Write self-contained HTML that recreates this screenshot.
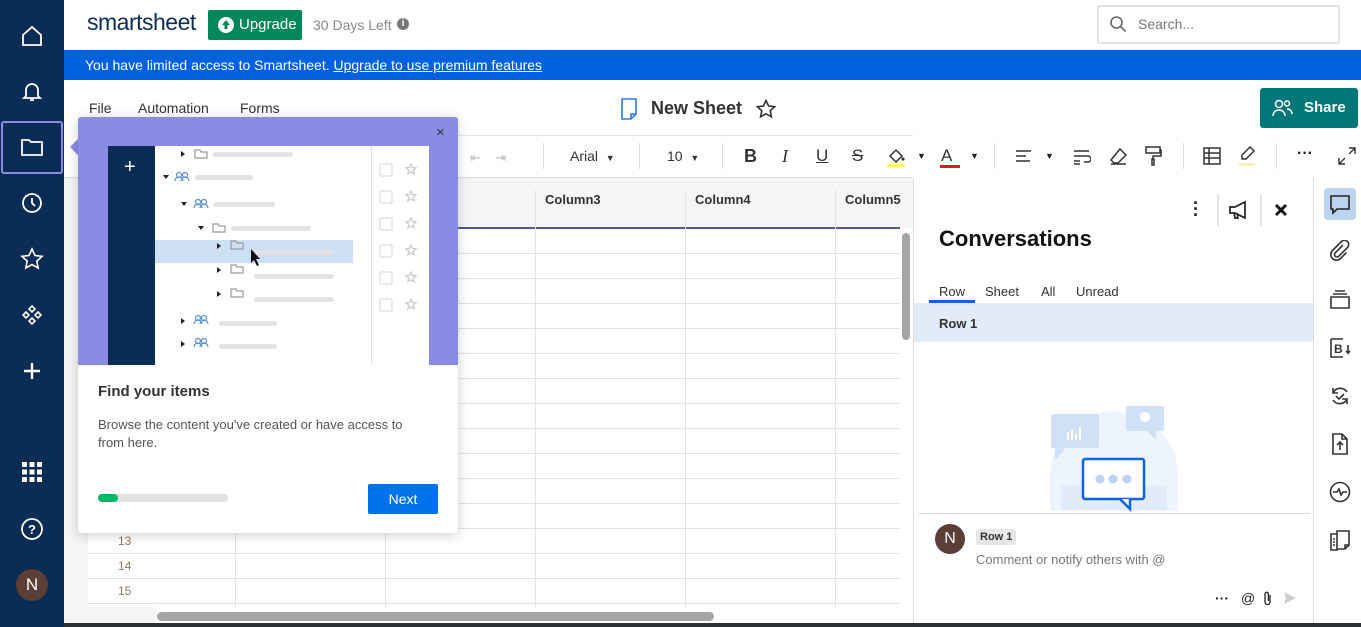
<!DOCTYPE html>
<html><head><meta charset="utf-8"><style>
*{box-sizing:border-box;margin:0;padding:0}
body{width:1361px;height:627px;overflow:hidden;position:relative;background:#fff;font-family:"Liberation Sans",sans-serif;color:#222}
.a{position:absolute}
.nav{left:0;top:0;width:64px;height:627px;background:#0b2d55}
.nav svg{position:absolute;left:20px}
.t{font-size:14px}
.tb{color:#333;font-size:14px}
.sep{width:1px;height:26px;background:#ddd;top:143px}
.rn{font-size:12px;color:#8a7a6a;left:118px}
</style></head><body>
<div class="a nav">
<svg style="top:24px" width="24" height="24" viewBox="0 0 24 24" fill="none" stroke="#fff" stroke-width="1.8"><path d="M3 11L12 3l9 8v10H3z"/></svg>
<svg style="top:79px" width="24" height="24" viewBox="0 0 24 24" fill="none" stroke="#fff" stroke-width="1.8"><path d="M6 17V11a6 6 0 0112 0v6l2 2H4zM10 21h4"/></svg>
<div class="a" style="left:1px;top:121px;width:62px;height:53px;border:2px solid #8a8be3;border-radius:3px"></div>
<svg style="top:135px" width="24" height="24" viewBox="0 0 24 24" fill="none" stroke="#fff" stroke-width="1.8"><path d="M2 5h7l2 2h11v13H2z"/></svg>
<svg style="top:191px" width="24" height="24" viewBox="0 0 24 24" fill="none" stroke="#fff" stroke-width="1.8"><circle cx="12" cy="12" r="9"/><path d="M12 7v5l3 3"/></svg>
<svg style="top:247px" width="24" height="24" viewBox="0 0 24 24" fill="none" stroke="#fff" stroke-width="1.6"><path d="M12 2l3 6.5 7 .8-5.2 4.8 1.4 7L12 17.6 5.8 21l1.4-7L2 9.3l7-.8z"/></svg>
<svg style="top:303px" width="24" height="24" viewBox="0 0 24 24" fill="none" stroke="#fff" stroke-width="1.6"><path d="M12 3l3 3-3 3-3-3zM6 9l3 3-3 3-3-3zM18 9l3 3-3 3-3-3zM12 15l3 3-3 3-3-3z"/></svg>
<svg style="top:359px" width="24" height="24" viewBox="0 0 24 24" stroke="#fff" stroke-width="2.4"><path d="M12 4v16M4 12h16"/></svg>
<svg style="top:460px" width="24" height="24" viewBox="0 0 24 24" fill="#fff"><rect x="2" y="2" width="5" height="5"/><rect x="9.5" y="2" width="5" height="5"/><rect x="17" y="2" width="5" height="5"/><rect x="2" y="9.5" width="5" height="5"/><rect x="9.5" y="9.5" width="5" height="5"/><rect x="17" y="9.5" width="5" height="5"/><rect x="2" y="17" width="5" height="5"/><rect x="9.5" y="17" width="5" height="5"/><rect x="17" y="17" width="5" height="5"/></svg>
<svg style="top:517px" width="24" height="24" viewBox="0 0 24 24" fill="none" stroke="#fff" stroke-width="1.8"><circle cx="12" cy="12" r="10"/><text x="12" y="17" fill="#fff" stroke="none" font-size="13" font-weight="bold" text-anchor="middle" font-family="Liberation Sans">?</text></svg>
<div class="a" style="left:16px;top:569px;width:32px;height:32px;border-radius:50%;background:#5b3e35;color:#fff;font-size:17px;text-align:center;line-height:32px">N</div>
</div>
<div class="a" style="left:87px;top:9px;font-size:23px;color:#0b2d55;letter-spacing:-0.5px">smartsheet</div>
<div class="a" style="left:208px;top:10px;width:94px;height:30px;background:#00875a;border-radius:2px;color:#fff;font-size:15px;line-height:30px;padding-left:31px">Upgrade</div>
<div class="a" style="left:218px;top:17px;width:16px;height:16px;border-radius:50%;background:#fff"><svg width="16" height="16"><path d="M8 3l-4 5h2.5v4h3V8H12z" fill="#00875a"/></svg></div>
<div class="a" style="left:313px;top:17px;font-size:14px;color:#888">30 Days Left</div>
<div class="a" style="left:397px;top:18px;width:12px;height:12px;border-radius:50%;background:#777;color:#fff;font-size:10px;text-align:center;line-height:12px;font-weight:bold">i</div>
<div class="a" style="left:1097px;top:5px;width:243px;height:39px;border:2px solid #e2e2e2;border-radius:3px"></div>
<svg class="a" style="left:1109px;top:15px" width="18" height="18" fill="none" stroke="#666" stroke-width="1.6"><circle cx="7.5" cy="7.5" r="5.5"/><path d="M11.5 11.5l5 5"/></svg>
<div class="a" style="left:1138px;top:16px;font-size:14px;color:#777">Search...</div>
<div class="a" style="left:64px;top:50px;width:1297px;height:30px;background:#0061e0"></div>
<div class="a" style="left:85px;top:57px;font-size:14px;color:#fff">You have limited access to Smartsheet. <u>Upgrade to use premium features</u></div>
<div class="a tb" style="left:89px;top:100px">File</div>
<div class="a tb" style="left:138px;top:100px">Automation</div>
<div class="a tb" style="left:240px;top:100px">Forms</div>
<svg class="a" style="left:620px;top:98px" width="18" height="22" fill="none" stroke="#2a7de1" stroke-width="1.6"><path d="M2 1h14v15l-5 5H2z"/><path d="M11 21v-5h5"/></svg>
<div class="a" style="left:651px;top:98px;font-size:18px;font-weight:bold;color:#333">New Sheet</div>
<svg class="a" style="left:756px;top:99px" width="20" height="20" fill="none" stroke="#333" stroke-width="1.6"><path d="M10 1.5l2.6 5.5 6 .7-4.4 4.1 1.2 6L10 14.8 4.6 17.8l1.2-6L1.4 7.7l6-.7z"/></svg>
<div class="a" style="left:1260px;top:88px;width:98px;height:40px;background:#00787a;border-radius:3px;color:#fff;font-weight:bold;font-size:15px;line-height:40px;padding-left:44px">Share</div>
<svg class="a" style="left:1272px;top:99px" width="22" height="18" fill="none" stroke="#fff" stroke-width="1.5"><circle cx="7" cy="5" r="3.5"/><path d="M1 17c0-4 3-6 6-6s6 2 6 6"/><circle cx="15" cy="4.5" r="2.5"/><path d="M15 10c3 0 5 2 5 5"/></svg>
<div class="a" style="left:458px;top:135px;width:455px;height:1px;background:#e5e5e5"></div>
<div class="a" style="left:470px;top:150px;color:#bbb;font-size:13px">⇤&nbsp;&nbsp;&nbsp;&nbsp;⇥</div>
<div class="a sep" style="left:543px"></div>
<div class="a tb" style="left:570px;top:148px">Arial&nbsp;&nbsp;<span style="font-size:9px">▼</span></div>
<div class="a sep" style="left:639px"></div>
<div class="a tb" style="left:667px;top:148px">10&nbsp;&nbsp;<span style="font-size:9px">▼</span></div>
<div class="a sep" style="left:722px"></div>
<div class="a" style="left:744px;top:146px;font-size:18px;font-weight:bold;color:#333">B</div>
<div class="a" style="left:782px;top:146px;font-size:18px;font-style:italic;color:#333;font-family:'Liberation Serif'">I</div>
<div class="a" style="left:816px;top:146px;font-size:17px;text-decoration:underline;color:#333">U</div>
<div class="a" style="left:852px;top:146px;font-size:17px;text-decoration:line-through;color:#333">S</div>
<svg class="a" style="left:886px;top:147px" width="20" height="22"><path d="M4 9l6-6 6 6-6 6z" fill="none" stroke="#333" stroke-width="1.5"/><circle cx="17" cy="12" r="1.6" fill="#333"/><rect x="1" y="17" width="18" height="3" fill="#f8f570"/></svg>
<div class="a" style="left:917px;top:151px;font-size:9px">▼</div>
<div class="a" style="left:941px;top:146px;font-size:17px;color:#333">A</div>
<div class="a" style="left:940px;top:165px;width:20px;height:3px;background:#e21b1b"></div>
<div class="a" style="left:970px;top:151px;font-size:9px">▼</div>
<div class="a sep" style="left:994px"></div>
<svg class="a" style="left:1015px;top:149px" width="18" height="16" stroke="#333" stroke-width="1.5"><path d="M1 2h15M1 7h10M1 12h14"/></svg>
<div class="a" style="left:1045px;top:151px;font-size:9px">▼</div>
<svg class="a" style="left:1073px;top:149px" width="18" height="16" fill="none" stroke="#333" stroke-width="1.5"><path d="M1 2h15M1 7h14a3 3 0 010 6h-4M1 12h6M1 15h6"/></svg>
<svg class="a" style="left:1109px;top:147px" width="18" height="18" fill="none" stroke="#333" stroke-width="1.5"><path d="M11 2l6 6-8 8H5l-3-3zM2 17h15"/></svg>
<svg class="a" style="left:1144px;top:146px" width="18" height="20" fill="none" stroke="#333" stroke-width="1.5"><rect x="2" y="1" width="14" height="6"/><path d="M16 4h1v6H9v3M8 13h2v6H8z"/></svg>
<div class="a sep" style="left:1183px"></div>
<svg class="a" style="left:1203px;top:147px" width="18" height="18" fill="none" stroke="#333" stroke-width="1.5"><rect x="1" y="1" width="16" height="16"/><path d="M1 6h16M1 11h16M6 1v16"/></svg>
<svg class="a" style="left:1238px;top:145px" width="18" height="22"><path d="M12 2l4 4-8 8H4v-4z" fill="none" stroke="#333" stroke-width="1.5"/><rect x="1" y="18" width="16" height="3" fill="#f9f0b0"/></svg>
<div class="a sep" style="left:1276px"></div>
<div class="a" style="left:1297px;top:145px;font-size:16px;font-weight:bold">···</div>
<svg class="a" style="left:1338px;top:147px" width="18" height="18" fill="none" stroke="#333" stroke-width="1.4"><path d="M11 1h6v6M17 1l-6 6M7 17H1v-6M1 17l6-6"/></svg>
<div class="a" style="left:64px;top:177px;width:849px;height:1px;background:#ddd"></div>
<div class="a" style="left:88px;top:178px;width:825px;height:50px;background:#f6f5f3"></div>
<div class="a" style="left:88px;top:227px;width:812px;height:2px;background:#4a5a9a"></div>
<div class="a" style="left:545px;top:192px;font-size:13px;font-weight:bold;color:#333">Column3</div>
<div class="a" style="left:695px;top:192px;font-size:13px;font-weight:bold;color:#333">Column4</div>
<div class="a" style="left:845px;top:192px;font-size:13px;font-weight:bold;color:#333">Column5</div>
<div class="a" style="left:88px;top:229px;width:812px;height:380px;background:repeating-linear-gradient(to bottom,#fff 0 24px,#e2e2e2 24px 25px)"></div>
<div class="a" style="left:235px;top:190px;width:1px;height:420px;background:#e2e2e2"></div>
<div class="a" style="left:385px;top:190px;width:1px;height:420px;background:#e2e2e2"></div>
<div class="a" style="left:535px;top:190px;width:1px;height:420px;background:#e2e2e2"></div>
<div class="a" style="left:685px;top:190px;width:1px;height:420px;background:#e2e2e2"></div>
<div class="a" style="left:835px;top:190px;width:1px;height:420px;background:#e2e2e2"></div>
<div class="a rn" style="top:534px">13</div>
<div class="a rn" style="top:559px">14</div>
<div class="a rn" style="top:584px">15</div>
<div class="a" style="left:64px;top:178px;width:24px;height:449px;background:#f6f5f3"></div>
<div class="a" style="left:88px;top:607px;width:825px;height:17px;background:#fff"></div>
<div class="a" style="left:88px;top:607px;width:68px;height:17px;background:#f6f5f3"></div>
<div class="a" style="left:157px;top:612px;width:557px;height:9px;border-radius:5px;background:#a5a5a5"></div>
<div class="a" style="left:902px;top:233px;width:8px;height:107px;border-radius:4px;background:#a5a5a5"></div>
<div class="a" style="left:64px;top:623px;width:1297px;height:4px;background:#2b3035"></div>
<div class="a" style="left:913px;top:178px;width:1px;height:445px;background:#ddd"></div>
<div class="a" style="left:1313px;top:178px;width:1px;height:445px;background:#ddd"></div>
<div class="a" style="left:1193px;top:200px;font-size:18px;font-weight:bold;line-height:6px">·<br>·<br>·</div>
<div class="a" style="left:1217px;top:194px;width:2px;height:32px;background:#e6e6e6"></div>
<svg class="a" style="left:1228px;top:200px" width="22" height="20" fill="none" stroke="#222" stroke-width="1.7"><path d="M2 7h5l10-5v16L7 13H2zM6 13l1 5h3l-1-5"/></svg>
<div class="a" style="left:1260px;top:194px;width:2px;height:32px;background:#e6e6e6"></div>
<svg class="a" style="left:1274px;top:203px" width="14" height="14" stroke="#111" stroke-width="3"><path d="M2 2l10 10M12 2L2 12"/></svg>
<div class="a" style="left:939px;top:226px;font-size:22px;font-weight:bold;color:#111">Conversations</div>
<div class="a t" style="left:939px;top:284px;font-size:13px;color:#333">Row</div>
<div class="a" style="left:929px;top:300px;width:46px;height:3px;background:#0b63e5"></div>
<div class="a" style="left:985px;top:284px;font-size:13px;color:#333">Sheet</div>
<div class="a" style="left:1041px;top:284px;font-size:13px;color:#333">All</div>
<div class="a" style="left:1076px;top:284px;font-size:13px;color:#333">Unread</div>
<div class="a" style="left:914px;top:303px;width:399px;height:39px;background:#e2ecf9"></div>
<div class="a" style="left:939px;top:316px;font-size:13px;font-weight:bold;color:#333">Row 1</div>
<div class="a" style="left:1050px;top:411px;width:128px;height:100px;border-radius:64px 64px 0 0;background:#eef4fd"></div>
<div class="a" style="left:1061px;top:486px;width:106px;height:24px;background:#e1ebfa"></div>
<div class="a" style="left:1051px;top:414px;width:48px;height:34px;background:#cfe0f7;border-radius:2px"></div>
<div class="a" style="left:1126px;top:406px;width:38px;height:25px;background:#cfe0f7;border-radius:2px"></div>
<svg class="a" style="left:1050px;top:405px" width="120" height="110"><path d="M5 42v14l10-12z" fill="#cfe0f7"/><path d="M96 25l10 10v-10z" fill="#cfe0f7"/><path d="M18 35v-8M22 35v-10M26 35v-6M30 35v-13" stroke="#fff" stroke-width="2"/><circle cx="95" cy="12" r="5" fill="#fff"/><rect x="33" y="54" width="61" height="40" rx="2" fill="#fff" stroke="#0b63e5" stroke-width="2.5"/><circle cx="50" cy="74" r="4.5" fill="#bcd3f5"/><circle cx="63" cy="74" r="4.5" fill="#bcd3f5"/><circle cx="77" cy="74" r="4.5" fill="#bcd3f5"/><path d="M70 94l10 10v-10" stroke="#0b63e5" stroke-width="2.5" fill="#fff"/></svg>
<div class="a" style="left:918px;top:513px;width:392px;height:1px;background:#ddd"></div>
<div class="a" style="left:935px;top:524px;width:30px;height:30px;border-radius:50%;background:#5b3e35;color:#fff;font-size:16px;text-align:center;line-height:30px">N</div>
<div class="a" style="left:976px;top:529px;padding:2px 4px;background:#e6e6e6;border-radius:3px;font-size:11px;font-weight:bold;color:#333">Row 1</div>
<div class="a" style="left:976px;top:552px;font-size:13px;color:#777">Comment or notify others with @</div>
<div class="a" style="left:1215px;top:590px;font-size:14px;font-weight:bold">···</div>
<div class="a" style="left:1241px;top:590px;font-size:14px">@</div>
<svg class="a" style="left:1263px;top:591px" width="10" height="15" fill="none" stroke="#222" stroke-width="1.3"><path d="M7 4v7a2.5 2.5 0 01-5 0V3a1.7 1.7 0 013.4 0v7"/></svg>
<svg class="a" style="left:1283px;top:591px" width="14" height="14"><path d="M1 1l12 6-12 6 2-6z" fill="#ccc"/></svg>
<div class="a" style="left:1324px;top:188px;width:32px;height:32px;background:#bcd3f0;border-radius:4px"></div>
<svg class="a" style="left:1329px;top:193px" width="22" height="22"><path d="M2 3h18v13H8l-4 4v-4H2z" fill="none" stroke="#222" stroke-width="1.6"/></svg>
<svg class="a" style="left:1329px;top:240px" width="22" height="22" fill="none" stroke="#333" stroke-width="1.6"><path d="M14 5l-8 8a2.5 2.5 0 003.5 3.5l9-9a4 4 0 00-6-6l-9 9a5.5 5.5 0 008 8l6-6"/></svg>
<svg class="a" style="left:1329px;top:288px" width="22" height="22" fill="none" stroke="#333" stroke-width="1.6"><path d="M6 3h10M4 6h14M2 9h18v11H2z"/></svg>
<svg class="a" style="left:1329px;top:337px" width="22" height="22" fill="none" stroke="#333" stroke-width="1.6"><path d="M2 2h12M2 2v18h12M19 8v8l-2-2M19 16l2-2"/><text x="5" y="16" font-size="12" font-weight="bold" fill="#333" stroke="none" font-family="Liberation Sans">B</text></svg>
<svg class="a" style="left:1329px;top:385px" width="22" height="22" fill="none" stroke="#333" stroke-width="1.6"><path d="M18 7a8 8 0 00-14 1M4 15a8 8 0 0014-1M4 3v5h5M18 19v-5h-5M7 11l3 3 5-5"/></svg>
<svg class="a" style="left:1329px;top:433px" width="22" height="22" fill="none" stroke="#333" stroke-width="1.6"><path d="M4 1h9l5 5v15H4zM13 1v5h5M11 17v-8M8 12l3-3 3 3"/></svg>
<svg class="a" style="left:1329px;top:481px" width="22" height="22" fill="none" stroke="#333" stroke-width="1.6"><circle cx="11" cy="11" r="9.5"/><path d="M4 11h4l2-3 2 6 2-3h4"/></svg>
<svg class="a" style="left:1329px;top:529px" width="22" height="22" fill="none" stroke="#333" stroke-width="1.6"><path d="M8 2h12v14l-4 4H8zM16 20v-4h4M2 5h6v16H2zM4 10h2M4 13h2M4 16h2"/></svg>
<div class="a" style="left:70px;top:139px;width:0;height:0;border-top:8px solid transparent;border-bottom:8px solid transparent;border-right:8px solid #8a8be3"></div>
<div class="a" style="left:78px;top:117px;width:380px;height:416px;background:#fff;border-radius:3px;box-shadow:0 2px 12px rgba(0,0,0,.2);overflow:hidden">
 <div class="a" style="left:0;top:0;width:380px;height:248px;background:#8a8be3"></div>
 <div class="a" style="left:358px;top:7px;font-size:15px;color:#333">×</div>
 <div class="a" style="left:30px;top:29px;width:47px;height:219px;background:#0b2d55"></div>
 <div class="a" style="left:46px;top:39px;color:#fff;font-size:20px">+</div>
 <div class="a" style="left:77px;top:29px;width:216px;height:219px;background:#fff"></div>
 <div class="a" style="left:293px;top:29px;width:58px;height:219px;background:#fff;border-left:1px solid #e2e2e2"></div>
 <div class="a" style="left:77px;top:123px;width:198px;height:23px;background:#cddff4"></div>
 <svg class="a" style="left:77px;top:29px" width="216" height="219">
  <g fill="#222"><path d="M26 5l4 3-4 3z"/><path d="M8 29l6 0-3 4z"/><path d="M26 56l6 0-3 4z"/><path d="M43 80l6 0-3 4z"/><path d="M62 97l4 3-4 3z"/><path d="M62 121l4 3-4 3z"/><path d="M62 145l4 3-4 3z"/><path d="M26 172l4 3-4 3z"/><path d="M26 195l4 3-4 3z"/></g>
  <g fill="none" stroke="#999" stroke-width="1.2"><path d="M40 4h5l1 2h6v6H40z"/><path d="M58 78h5l1 2h6v6H58z"/><path d="M76 95h5l1 2h6v6H76z"/><path d="M76 119h5l1 2h6v6H76z"/><path d="M76 143h5l1 2h6v6H76z"/></g>
  <g fill="#e2e2e2"><rect x="58" y="6" width="80" height="5" rx="2.5"/><rect x="40" y="29" width="58" height="5" rx="2.5"/><rect x="58" y="56" width="62" height="5" rx="2.5"/><rect x="76" y="80" width="80" height="5" rx="2.5"/><rect x="99" y="104" width="80" height="5" rx="2.5"/><rect x="99" y="128" width="80" height="5" rx="2.5"/><rect x="99" y="151" width="80" height="5" rx="2.5"/><rect x="64" y="175" width="58" height="5" rx="2.5"/><rect x="64" y="198" width="58" height="5" rx="2.5"/></g>
  <path d="M96 103v14l3-3 3 6 2-1-3-6h4z" fill="#111"/>
 </svg>
 <svg class="a" style="left:0;top:0" width="380" height="248" fill="none" stroke="#5a8fd4" stroke-width="1.2">
  <circle cx="101" cy="58" r="2.5"/><circle cx="107" cy="58" r="2.5"/><path d="M97 64a4 4 0 018 0M103 64a4 4 0 018 0"/>
  <circle cx="120" cy="85" r="2.5"/><circle cx="126" cy="85" r="2.5"/><path d="M116 91a4 4 0 018 0M122 91a4 4 0 018 0"/>
  <circle cx="120" cy="201" r="2.5"/><circle cx="126" cy="201" r="2.5"/><path d="M116 207a4 4 0 018 0M122 207a4 4 0 018 0"/>
  <circle cx="120" cy="224" r="2.5"/><circle cx="126" cy="224" r="2.5"/><path d="M116 230a4 4 0 018 0M122 230a4 4 0 018 0"/>
 </svg>
 <svg class="a" style="left:300px;top:29px" width="50" height="170" fill="none" stroke="#ddd" stroke-width="1.3">
  <rect x="2" y="18" width="12" height="12" rx="1"/><rect x="2" y="45" width="12" height="12" rx="1"/><rect x="2" y="72" width="12" height="12" rx="1"/><rect x="2" y="99" width="12" height="12" rx="1"/><rect x="2" y="126" width="12" height="12" rx="1"/><rect x="2" y="153" width="12" height="12" rx="1"/>
  <g stroke="#ccc"><path d="M33 18l1.5 3.5 3.5.3-2.7 2.4.8 3.6-3.1-1.9-3.1 1.9.8-3.6-2.7-2.4 3.5-.3z"/><path d="M33 45l1.5 3.5 3.5.3-2.7 2.4.8 3.6-3.1-1.9-3.1 1.9.8-3.6-2.7-2.4 3.5-.3z"/><path d="M33 72l1.5 3.5 3.5.3-2.7 2.4.8 3.6-3.1-1.9-3.1 1.9.8-3.6-2.7-2.4 3.5-.3z"/><path d="M33 99l1.5 3.5 3.5.3-2.7 2.4.8 3.6-3.1-1.9-3.1 1.9.8-3.6-2.7-2.4 3.5-.3z"/><path d="M33 126l1.5 3.5 3.5.3-2.7 2.4.8 3.6-3.1-1.9-3.1 1.9.8-3.6-2.7-2.4 3.5-.3z"/><path d="M33 153l1.5 3.5 3.5.3-2.7 2.4.8 3.6-3.1-1.9-3.1 1.9.8-3.6-2.7-2.4 3.5-.3z"/></g>
 </svg>
 <div class="a" style="left:20px;top:266px;font-size:15px;font-weight:bold;color:#333">Find your items</div>
 <div class="a" style="left:20px;top:299px;width:326px;font-size:13px;line-height:18px;color:#555">Browse the content you've created or have access to from here.</div>
 <div class="a" style="left:20px;top:377px;width:130px;height:8px;border-radius:4px;background:#e2e2e2"></div>
 <div class="a" style="left:20px;top:377px;width:20px;height:8px;border-radius:4px;background:#00b865"></div>
 <div class="a" style="left:290px;top:367px;width:70px;height:30px;background:#0073ea;border-radius:2px;color:#fff;font-size:14px;text-align:center;line-height:30px">Next</div>
</div>
</body></html>
